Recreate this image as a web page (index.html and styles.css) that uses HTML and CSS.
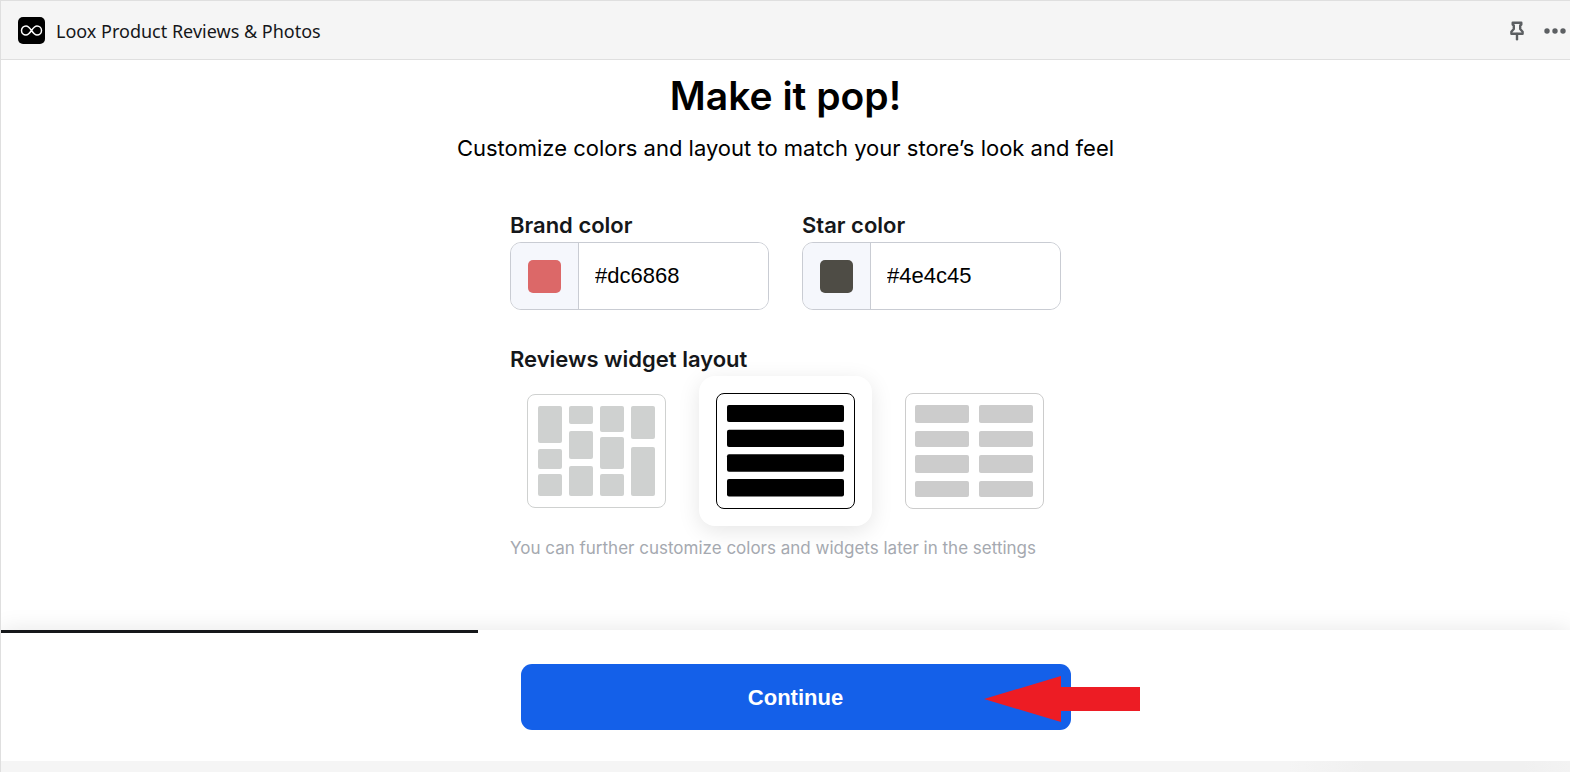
FILE: index.html
```html
<!DOCTYPE html>
<html lang="en">
  <head>
    <meta charset="UTF-8" />
    <meta name="viewport" content="width=device-width, initial-scale=1.0" />
    <title>Loox Product Reviews &amp; Photos</title>
    <link rel="stylesheet" href="styles.css">
  </head>
  <body>
    <header class="topbar">
      <svg class="logo" viewBox="0 0 27 27" aria-hidden="true">
        <rect width="27" height="27" rx="5" fill="#000" />
        <path d="M13.5 13.5C11.8 11 10.3 9 8 9a4.500 4.500 0 0 0 0 9c2.300 0 3.800-2 5.500-4.500S16.700 9 19 9a4.500 4.500 0 0 1 0 9c-2.300 0-3.800-2-5.500-4.500z" fill="none" stroke="#fff" stroke-width="1.500" />
      </svg>
      <span class="app-name">Loox Product Reviews &amp; Photos</span>
      <div class="actions">
        <button type="button" class="icon-btn" aria-label="Pin app">
          <svg width="14" height="20" viewBox="0 0 14 20" fill="none" stroke="#5c5f62" stroke-width="2.400" stroke-linejoin="round" stroke-linecap="round">
            <path d="M2.700 1.800h8.600v1.700L10.200 4.500v3.500l2.400 2.700v2H1.400v-2L3.800 8V4.500L2.700 3.500z" />
            <path d="M7 13v5.300" />
          </svg>
        </button>
        <button type="button" class="icon-btn" aria-label="More actions">
          <svg width="22" height="6" viewBox="0 0 22 6" fill="#5c5f62">
            <circle cx="3" cy="3" r="2.700" />
            <circle cx="11" cy="3" r="2.700" />
            <circle cx="19" cy="3" r="2.700" />
          </svg>
        </button>
      </div>
    </header>

    <main>
      <h1>Make it pop!</h1>
      <p class="subtitle">Customize colors and layout to match your store’s look and feel</p>

      <form class="settings" id="settings">
        <div class="colors">
          <div class="field">
            <label for="brandColor">Brand color</label>
            <div class="color-input">
              <span class="swatch-cell"><span class="swatch brand"></span></span>
              <input type="text" id="brandColor" value="#dc6868" />
            </div>
          </div>
          <div class="field">
            <label for="starColor">Star color</label>
            <div class="color-input">
              <span class="swatch-cell"><span class="swatch star"></span></span>
              <input type="text" id="starColor" value="#4e4c45" />
            </div>
          </div>
        </div>

        <fieldset>
          <legend>Reviews widget layout</legend>
          <div class="layouts">
            <label class="layout">
              <input type="radio" name="layout" value="grid" aria-label="Grid" />
              <svg viewBox="0 0 139 116">
                <rect x="0.500" y="1.500" width="138" height="113" rx="7.500" fill="#fff" stroke="#cfd1d0" />
                <g fill="#cfd1d0">
                  <rect x="11" y="13" width="24" height="37" rx="2" />
                  <rect x="11" y="56" width="24" height="20" rx="2" />
                  <rect x="11" y="81" width="24" height="22" rx="2" />
                  <rect x="42" y="13" width="24" height="18" rx="2" />
                  <rect x="42" y="38" width="24" height="28" rx="2" />
                  <rect x="42" y="73" width="24" height="30" rx="2" />
                  <rect x="73" y="13" width="24" height="26" rx="2" />
                  <rect x="73" y="44" width="24" height="32" rx="2" />
                  <rect x="73" y="81" width="24" height="22" rx="2" />
                  <rect x="104" y="13" width="24" height="33" rx="2" />
                  <rect x="104" y="54" width="24" height="49" rx="2" />
                </g>
              </svg>
            </label>
            <label class="layout selected">
              <input type="radio" name="layout" value="list" aria-label="List" checked />
              <svg viewBox="0 0 139 116">
                <rect x="0.500" y="0.500" width="138" height="115" rx="7.500" fill="#fff" stroke="#000" />
                <g fill="#000">
                  <rect x="11" y="12" width="117" height="17" rx="2" />
                  <rect x="11" y="36.700" width="117" height="17.300" rx="2" />
                  <rect x="11" y="61.300" width="117" height="17.500" rx="2" />
                  <rect x="11" y="86" width="117" height="17.500" rx="2" />
                </g>
              </svg>
            </label>
            <label class="layout">
              <input type="radio" name="layout" value="columns" aria-label="Two columns" />
              <svg viewBox="0 0 139 116">
                <rect x="0.500" y="0.500" width="138" height="115" rx="7.500" fill="#fff" stroke="#ccc" />
                <g fill="#ccc">
                  <rect x="10" y="12" width="54" height="18" rx="2" />
                  <rect x="74" y="12" width="54" height="18" rx="2" />
                  <rect x="10" y="38" width="54" height="16" rx="2" />
                  <rect x="74" y="38" width="54" height="16" rx="2" />
                  <rect x="10" y="62" width="54" height="18" rx="2" />
                  <rect x="74" y="62" width="54" height="18" rx="2" />
                  <rect x="10" y="88" width="54" height="16" rx="2" />
                  <rect x="74" y="88" width="54" height="16" rx="2" />
                </g>
              </svg>
            </label>
          </div>
        </fieldset>
        <p class="hint">You can further customize colors and widgets later in the settings</p>
      </form>
    </main>

    <footer>
      <div class="progress"></div>
      <div class="cta">
        <button type="submit" form="settings" class="continue">Continue</button>
        <svg class="arrow" viewBox="0 0 156 46" aria-hidden="true">
          <path d="M0 23L77 0v11h79v24H77v11z" fill="#ed1c24" />
        </svg>
      </div>
    </footer>
  </body>
</html>
```

FILE: styles.css
```css
:root {
  --blue: #1460e9;
  --border-color: #c9ccd3;
  --bar: #f5f5f5;
  --text-color: #15171a;
  --font-family: Inter, sans-serif;
}

* {
  box-sizing: border-box;
}

body {
  margin: 0;
  min-height: 100vh;
  display: flex;
  flex-direction: column;
  padding-bottom: 11px;
  border-left: 1px solid #dfdfdf;
  font-family: var(--font-family);
  background: linear-gradient(to right, var(--bar) 82%, #f0f0f0 87%, #f0f0f0 97%, #f3f3f3);
  color: var(--text-color);
}

.topbar {
  display: flex;
  align-items: center;
  height: 60px;
  padding: 0 4px 0 17px;
  border-top: 1px solid #dfdfdf;
  border-bottom: 1px solid #dfdfdf;
  background: var(--bar);
}

.logo {
  width: 27px;
  height: 27px;
  margin-right: 11px;
}

.app-name {
  padding-top: 2px;
  font-family: "Noto Sans", sans-serif;
  font-size: 18px;
}

.actions {
  display: flex;
  align-items: center;
  gap: 20px;
  margin-left: auto;
  padding-top: 2px;
}

.icon-btn {
  display: flex;
  padding: 0;
  border: none;
  background: none;
  cursor: pointer;
}

main {
  flex: 1;
  padding: 12px 16px 0;
  background: #fff;
}

h1 {
  margin: 0;
  font-size: 39px;
  font-weight: 600;
  line-height: 48px;
  text-align: center;
  color: #000;
}

.subtitle {
  margin: 12px 0 44px;
  font-size: 22px;
  line-height: 32px;
  text-align: center;
  color: #000;
}

.settings {
  max-width: 551px;
  margin: 0 auto;
}

.colors {
  display: grid;
  grid-template-columns: repeat(2, minmax(0, 1fr));
  gap: 33px;
  margin-bottom: 32px;
}

.field label,
legend {
  display: block;
  padding: 0;
  font-size: 22px;
  font-weight: 600;
  line-height: 34px;
}

.color-input {
  display: flex;
  height: 68px;
  overflow: hidden;
  border: 1px solid var(--border-color);
  border-radius: 11px;
}

.swatch-cell {
  display: flex;
  align-items: center;
  padding: 0 17px;
  border-right: 1px solid var(--border-color);
  background: #f5f7fc;
}

.swatch {
  width: 33px;
  height: 33px;
  border-radius: 5px;
}

.brand {
  background: #dc6868;
}

.star {
  background: #4e4c45;
}

.color-input input {
  flex: 1;
  min-width: 0;
  padding: 0 16px;
  border: none;
  font-family: "Liberation Sans", sans-serif;
  font-size: 22px;
  color: #000;
}

fieldset {
  margin: 0;
  padding: 0;
  border: none;
}

.layouts {
  display: grid;
  grid-template-columns: repeat(3, 1fr);
  gap: 16px;
}

.layout {
  padding: 17px;
  border-radius: 16px;
  cursor: pointer;
}

.layout input {
  position: absolute;
  opacity: 0;
}

.layout svg {
  display: block;
  width: 100%;
}

.selected {
  background: #fff;
  box-shadow: 0 5px 22px rgba(0, 0, 0, 0.1);
}

.hint {
  margin: 10px 0 0;
  font-size: 17px;
  line-height: 24px;
  color: #a5a9b0;
}

footer {
  background: #fff;
  box-shadow: 0 0 22px rgba(0, 0, 0, 0.1);
  clip-path: inset(-30px 0 0 0);
}

.progress {
  width: 477px;
  height: 3px;
  background: var(--text-color);
}

.cta {
  position: relative;
  left: 10px;
  max-width: 550px;
  margin: 0 auto;
  padding: 31px 0;
}

.continue {
  display: block;
  width: 100%;
  height: 66px;
  padding: 2px 0 0;
  border: none;
  border-radius: 11px;
  background: var(--blue);
  color: #fff;
  font-family: "Liberation Sans", sans-serif;
  font-size: 22px;
  font-weight: 700;
  cursor: pointer;
}

.continue:hover {
  background: #0f52c9;
}

/* pointer drawn over the right end of the button */
.arrow {
  position: absolute;
  top: 43px;
  right: -69px;
  width: 156px;
  height: 46px;
  pointer-events: none;
}
```
